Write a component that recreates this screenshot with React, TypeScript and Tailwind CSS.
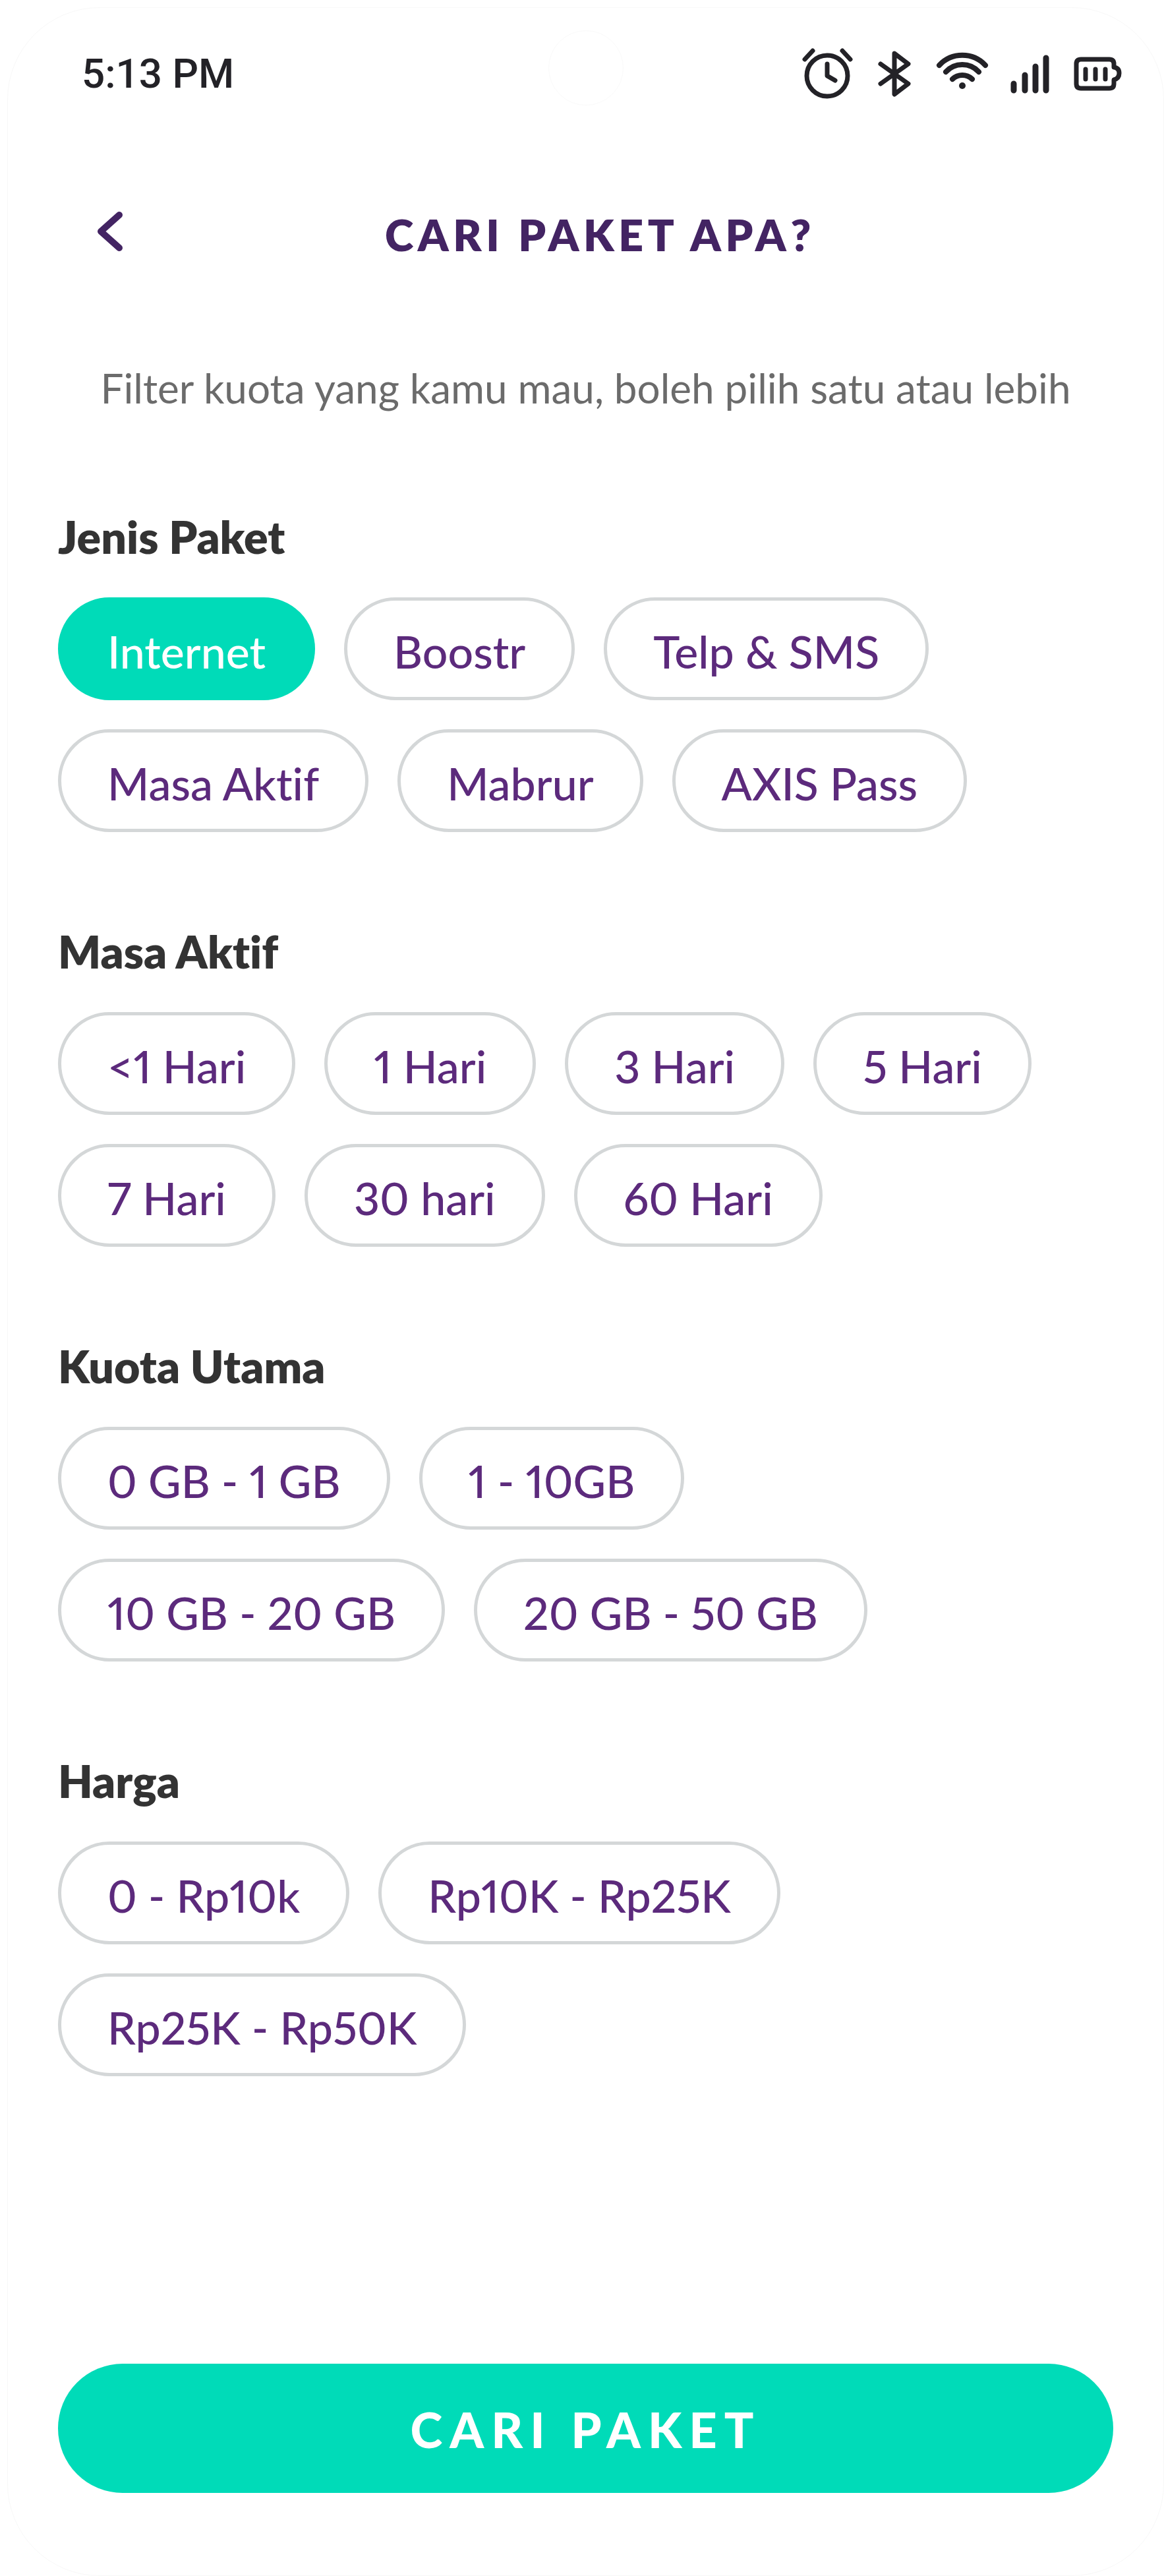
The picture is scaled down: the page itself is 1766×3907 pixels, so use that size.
import { useState } from 'react';
import clsx from 'clsx';

interface IFilterGroup {
  title: string;
  options: string[];
}

const GROUPS: IFilterGroup[] = [
  {
    title: 'Jenis Paket',
    options: ['Internet', 'Boostr', 'Telp & SMS', 'Masa Aktif', 'Mabrur', 'AXIS Pass'],
  },
  {
    title: 'Masa Aktif',
    options: ['<1 Hari', '1 Hari', '3 Hari', '5 Hari', '7 Hari', '30 hari', '60 Hari'],
  },
  {
    title: 'Kuota Utama',
    options: ['0 GB - 1 GB', '1 - 10GB', '10 GB - 20 GB', '20 GB - 50 GB'],
  },
  {
    title: 'Harga',
    options: ['0 - Rp10k', 'Rp10K - Rp25K', 'Rp25K - Rp50K'],
  },
];

function StatusBar() {
  return (
    <div className="flex h-[200px] items-center justify-between pr-[60px] pl-[112px] text-[#232227]">
      <span className="font-['Roboto',sans-serif] text-[62px] leading-[80px] font-medium">
        5:13 PM
      </span>

      <svg
        className="h-[84px] w-[490px]"
        viewBox="0 0 490 84"
        fill="none"
        stroke="currentColor"
        strokeWidth="7"
        strokeLinecap="round"
        strokeLinejoin="round"
        aria-hidden="true"
      >
        {/* alarm */}
        <circle cx="40" cy="45" r="31" />
        <path d="M40 27v18l12 7M6 20 18 7M75 20 63 7" />
        {/* bluetooth */}
        <path d="M121 27 163 57 142 73V11L163 27 121 57" />
        {/* wifi */}
        <path
          strokeWidth="8"
          d="M210 29a48 48 0 0 1 70 0M220 39a34 34 0 0 1 50 0M230 50a22 22 0 0 1 30 0"
        />
        <circle cx="245" cy="60" r="5" fill="currentColor" stroke="none" />
        {/* signal */}
        <path strokeWidth="9" d="M323 57v10M340 44v23M356 31v36M372 18v49" />
        {/* battery */}
        <path d="M425 20h43q7 0 7 7v5q8 1 8 9t-8 10v6q0 7-7 7h-43q-7 0-7-7V27q0-7 7-7z" />
        <path d="M432 35v15M447 35v15M462 35v15" />
      </svg>
    </div>
  );
}

function FilterGroup({
  title,
  options,
  selected,
  onToggle,
}: IFilterGroup & { selected: string[]; onToggle: (key: string) => void }) {
  return (
    <section className="flex flex-col gap-[52px]">
      <h2 className="text-[68px] leading-[80px] font-extrabold text-[#333333]">{title}</h2>

      <div className="flex flex-wrap gap-[44px] pr-10">
        {options.map(option => {
          const key = `${title}/${option}`;
          const isSelected = selected.includes(key);

          return (
            <button
              key={key}
              type="button"
              aria-pressed={isSelected}
              onClick={() => onToggle(key)}
              className={clsx(
                'h-[156px] rounded-full border-5 px-[70px] pt-2 text-[68px] leading-[80px] font-medium proportional-nums',
                isSelected
                  ? 'border-[#00dbb8] bg-[#00dbb8] text-white'
                  : 'border-[#d4d7d8] text-[#5c2a7c]',
              )}
            >
              {option}
            </button>
          );
        })}
      </div>
    </section>
  );
}

export default function App() {
  const [selected, setSelected] = useState<string[]>(['Jenis Paket/Internet']);

  const toggle = (key: string) =>
    setSelected(prev => (prev.includes(key) ? prev.filter(k => k !== key) : [...prev, key]));

  return (
    <div className="flex min-h-screen flex-col bg-white pt-[11px] pl-[11px] font-['Lato',sans-serif] [font-variant-ligatures:none]">
      <div className="relative flex flex-1 flex-col rounded-[140px] border border-[#f8f8f8]">
        {/* camera hole */}
        <div className="absolute top-[34px] left-1/2 size-[114px] -translate-x-1/2 rounded-full border border-[#fafafa]" />

        <StatusBar />

        <header className="flex items-start px-[132px] pt-[104px] text-[#432463]">
          <button type="button" aria-label="Kembali">
            <svg
              className="h-[70px] w-[44px]"
              viewBox="0 0 44 70"
              fill="none"
              stroke="currentColor"
              strokeWidth="10"
              strokeLinecap="round"
              strokeLinejoin="round"
            >
              <path d="M37 10 9 35l28 25" />
            </svg>
          </button>
          <h1 className="flex-1 text-center text-[66px] leading-[80px] font-extrabold tracking-widest">
            CARI PAKET APA?
          </h1>
        </header>

        <p className="mt-[152px] text-center text-[62px] leading-[80px] text-[#6b6b6b]">
          Filter kuota yang kamu mau, boleh pilih satu atau lebih
        </p>

        <main className="mt-[146px] flex flex-col gap-[141px] px-[76px]">
          {GROUPS.map(group => (
            <FilterGroup key={group.title} {...group} selected={selected} onToggle={toggle} />
          ))}
        </main>

        <footer className="mt-auto px-[76px] pb-[125px]">
          <button
            type="button"
            className="h-[196px] w-full rounded-full bg-[#00dbb8] pt-1 text-[74px] leading-[80px] font-black tracking-[11px] text-white"
          >
            CARI PAKET
          </button>
        </footer>
      </div>
    </div>
  );
}
